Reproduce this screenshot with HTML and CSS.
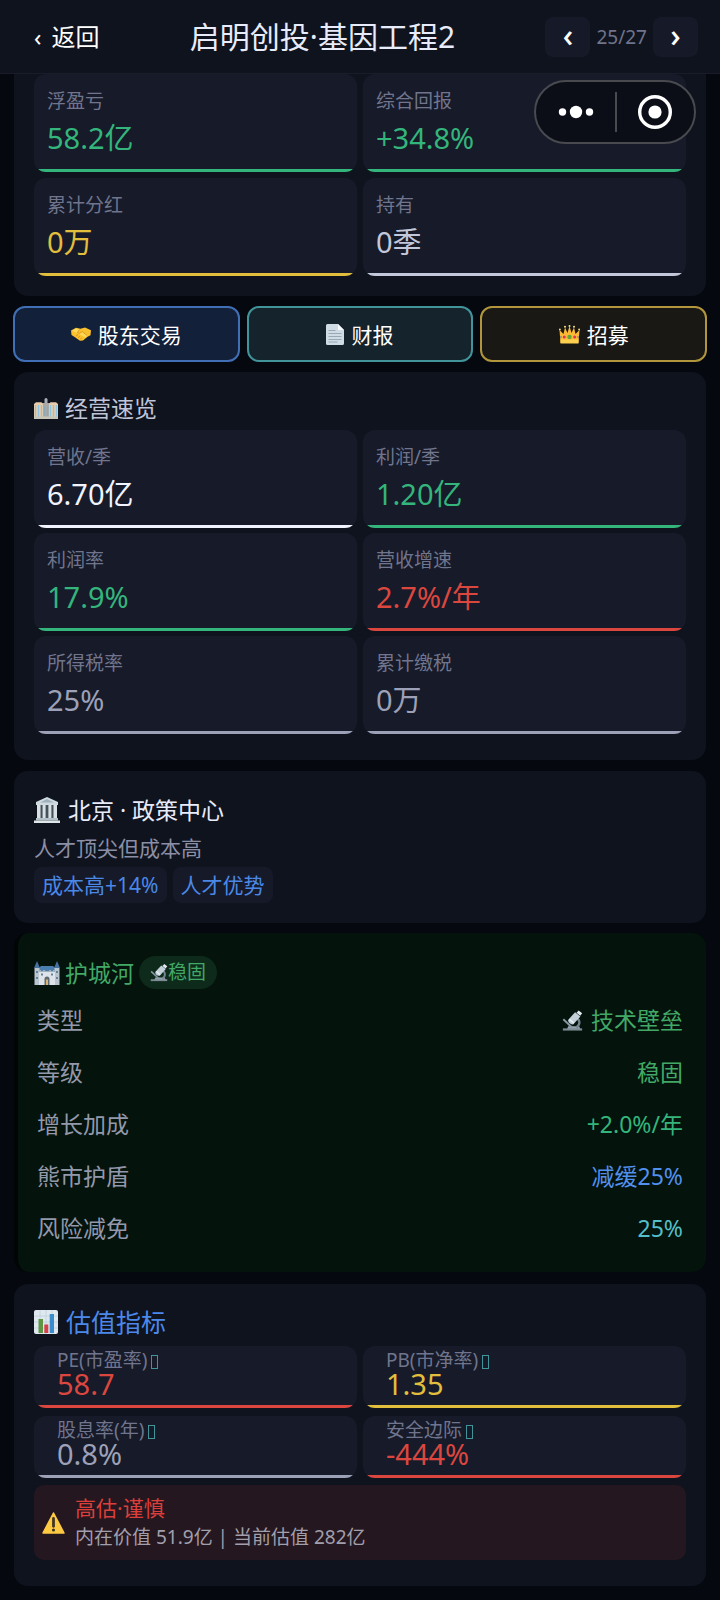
FILE: index.html
```html
<!DOCTYPE html>
<html lang="zh-CN">
<head>
<meta charset="utf-8">
<meta name="viewport" content="width=device-width, initial-scale=1">
<title>启明创投·基因工程2</title>
<link rel="stylesheet" href="styles.css">
</head>
<body>
<svg class="defs" aria-hidden="true">
  <symbol id="microscope" viewBox="0 0 24 24">
    <path d="M1 21h22v2.500H1z" fill="#7d8b95"/>
    <path d="M7 18.500h12.500l1.500 3H6z" fill="#94a3ad"/>
    <path d="M15 8.500c6 2 6.500 8 1.500 11.500" fill="none" stroke="#758590" stroke-width="2.600"/>
    <path d="M1.500 10.500l10 9.500" stroke="#8798a3" stroke-width="2.200"/>
    <path d="M15 2.500l6 4.800-8 9c-2.500 1-6.500-2-6-5z" fill="#c3d0d8"/>
    <path d="M8.500 10.500l5 4.500" stroke="#eef3f6" stroke-width="1.500"/>
    <path d="M19 .5l4 3.200-2.200 3-4.200-3.500z" fill="#e2eaef"/>
  </symbol>
</svg>

<header class="topbar">
  <button class="back" type="button"><span>‹</span><span>返回</span></button>
  <h1 class="page-title">启明创投·基因工程2</h1>
  <nav class="pager" aria-label="翻页">
    <button class="pager-button" type="button" aria-label="上一个">‹</button>
    <span class="pager-count">25/27</span>
    <button class="pager-button" type="button" aria-label="下一个">›</button>
  </nav>
</header>

<div class="capsule">
  <button class="capsule-button" type="button" aria-label="更多">
    <svg width="36" height="14" viewBox="0 0 36 14"><g fill="#fff"><circle cx="4.500" cy="7" r="3.700"/><circle cx="18" cy="7" r="6.200"/><circle cx="31.500" cy="7" r="3.700"/></g></svg>
  </button>
  <button class="capsule-button" type="button" aria-label="关闭">
    <svg width="34" height="34" viewBox="0 0 34 34"><circle cx="17" cy="17" r="15.300" fill="none" stroke="#fff" stroke-width="3.400"/><circle cx="17" cy="17" r="6.600" fill="#fff"/></svg>
  </button>
</div>

<main class="content">
  <section class="card card-cut">
    <div class="tiles tiles-wide">
      <div class="tile green"><span class="label">浮盈亏</span><span class="value">58.2亿</span></div>
      <div class="tile green"><span class="label">综合回报</span><span class="value">+34.8%</span></div>
      <div class="tile yellow"><span class="label">累计分红</span><span class="value">0万</span></div>
      <div class="tile silver"><span class="label">持有</span><span class="value">0季</span></div>
    </div>
  </section>

  <div class="actions">
    <button class="action action-blue" type="button">
      <svg width="20" height="14" viewBox="0 0 20 14"><path d="M0 3.500L5 .8l4.500 1L14 .5l6 2.800-.5 5-3 1.500-4.500 3.700-3 .2-5-3.400L.5 8z" fill="#fbc02d"/><path d="M1 3.800L5 1.500l4 1-2.500 3 2 1 3-2 5 4-1.500 2" fill="#ffd95a"/><path d="M8.500 2.500L6.300 5.700l2 .8 3-1.800 5 4M5 9l2-1.500M7 10.800l2-1.800M9.300 12.200L11 10.500" fill="none" stroke="#d68b16" stroke-width=".8"/></svg>
      股东交易
    </button>
    <button class="action action-teal" type="button">
      <svg width="18" height="21" viewBox="0 0 18 21"><path d="M1.500 0H12l6 6v13.500a1.500 1.500 0 0 1-1.500 1.500h-15A1.500 1.500 0 0 1 0 19.500v-18A1.500 1.500 0 0 1 1.500 0z" fill="#cfdce5"/><path d="M12 0l6 6h-6z" fill="#f8fbfd"/><path d="M2.500 6.500h7M2.500 9.500h13M2.500 12.500h13M2.500 15.500h13M2.500 18h9" stroke="#98a9b5" stroke-width="1"/></svg>
      财报
    </button>
    <button class="action action-gold" type="button">
      <svg width="21" height="19" viewBox="0 0 21 19"><path d="M1.500 18L.5 5l4 4L6 2.500 8.500 8l2-7 2 7L15 2.500 16.500 9l4-4-1 13z" fill="#fbb936"/><path d="M1.500 14.500h18V18.500h-18z" fill="#ffd04f"/><g fill="#ffe082"><circle cx=".9" cy="4.500" r=".9"/><circle cx="6" cy="1.800" r="1"/><circle cx="10.500" cy="1" r="1"/><circle cx="15" cy="1.800" r="1"/><circle cx="20.100" cy="4.500" r=".9"/></g><circle cx="10.500" cy="12" r="2.200" fill="#65a532"/><circle cx="5.300" cy="12" r="1.500" fill="#dc3460"/><circle cx="15.700" cy="12" r="1.500" fill="#dc3460"/><circle cx="2" cy="12" r=".8" fill="#397bbc"/><circle cx="19" cy="12" r=".8" fill="#397bbc"/></svg>
      招募
    </button>
  </div>

  <section class="card card-overview">
    <h2 class="heading muted">
      <svg width="24" height="21" viewBox="0 0 24 21"><path d="M10.500 1.500a1.500 1.500 0 0 1 3 0V7h-3z" fill="#a8b0b5"/><path d="M7 5h10v16H7z" fill="#a9aaa6"/><path d="M0 6l2-1.800h5.500L9 6v15H0zM15 6l1.500-1.800H22L24 6v15h-9z" fill="#e8cba9"/><path d="M1.500 7v12M4.500 7v12M7.500 7v12M16.500 7v12M19.500 7v12M22.500 7v12" stroke="#8dc5e0" stroke-width="1.300"/><path d="M10.500 8v10M13.500 8v10" stroke="#8ba9b7" stroke-width="1.200"/><path d="M0 18.500h24V21H0z" fill="#c7c4b9"/></svg>
      经营速览
    </h2>
    <div class="tiles">
      <div class="tile white"><span class="label">营收/季</span><span class="value">6.70亿</span></div>
      <div class="tile green"><span class="label">利润/季</span><span class="value">1.20亿</span></div>
      <div class="tile green"><span class="label">利润率</span><span class="value">17.9%</span></div>
      <div class="tile red"><span class="label">营收增速</span><span class="value">2.7%/年</span></div>
      <div class="tile gray"><span class="label">所得税率</span><span class="value">25%</span></div>
      <div class="tile gray"><span class="label">累计缴税</span><span class="value">0万</span></div>
    </div>
  </section>

  <section class="card card-city">
    <h2 class="heading city-heading">
      <svg width="26" height="26" viewBox="0 0 26 26"><path d="M13 0l11 5v3H2V5z" fill="#cfdade"/><path d="M13 2l7 3.500H6z" fill="#9fb1ba"/><path d="M3.500 8h19v14h-19z" fill="#45535c"/><path d="M3 8h3.500v14H3zM8.600 8h3v14h-3zM14.400 8h3v14h-3zM19.500 8H23v14h-3.500z" fill="#d8e0e3"/><path d="M2 21h22v2.500H2z" fill="#b2c0c7"/><path d="M0 23.500h26V26H0z" fill="#e0e7ea"/></svg>
      北京 · 政策中心
    </h2>
    <p class="city-note">人才顶尖但成本高</p>
    <div class="tags"><span class="tag">成本高+14%</span><span class="tag">人才优势</span></div>
  </section>

  <section class="card card-moat">
    <h2 class="heading moat-heading">
      <svg width="26" height="24" viewBox="0 0 26 24"><path d="M3 0l3 7H0zM23 0l3 7h-6z" fill="#47719f"/><path d="M5 7l2-2h12l2 2v4H5z" fill="#4b7eaf"/><path d="M.5 7h5v17h-5zM20.500 7h5v17h-5z" fill="#b9c6cf"/><path d="M5 11h16v13H5z" fill="#dde3e8"/><path d="M5 11v-2h2v1h2V9h2v1h4V9h2v1h2V9h2v2z" fill="#9fb0bd"/><path d="M10.500 24v-6a2.500 2.500 0 0 1 5 0v6z" fill="#5d6970"/><path d="M12 24v-5.500h2V24z" fill="#d9b475"/><path d="M7 12.500h2v2H7zM17 12.500h2v2h-2zM2 10h2v2H2zM22 10h2v2h-2zM2 16h2v2H2zM22 16h2v2h-2z" fill="#688399"/></svg>
      护城河
      <span class="badge"><svg width="18" height="19"><use href="#microscope"/></svg>稳固</span>
    </h2>
    <dl class="facts">
      <div class="fact"><dt>类型</dt><dd><svg width="21" height="23"><use href="#microscope"/></svg>技术壁垒</dd></div>
      <div class="fact"><dt>等级</dt><dd>稳固</dd></div>
      <div class="fact"><dt>增长加成</dt><dd class="green">+2.0%/年</dd></div>
      <div class="fact"><dt>熊市护盾</dt><dd class="blue">减缓25%</dd></div>
      <div class="fact"><dt>风险减免</dt><dd class="teal">25%</dd></div>
    </dl>
  </section>

  <section class="card card-valuation">
    <h2 class="heading valuation-heading">
      <svg width="24" height="24" viewBox="0 0 24 24"><rect width="24" height="24" rx="2" fill="#dfe8ef"/><path d="M0 6h24M0 12h24M0 18h24M6 0v24M12 0v24M18 0v24" stroke="#bed0dc" stroke-width=".8"/><path d="M4.500 9h4.500v14H4.500z" fill="#5d9645"/><path d="M10.300 14.500h4V23h-4z" fill="#d5404b"/><path d="M15.700 4H20v19h-4.300z" fill="#398dcc"/></svg>
      估值指标
    </h2>
    <div class="tiles tiles-compact">
      <div class="tile red"><span class="label">PE(市盈率)<button class="hint" type="button" aria-label="市盈率说明"></button></span><span class="value">58.7</span></div>
      <div class="tile yellow"><span class="label">PB(市净率)<button class="hint" type="button" aria-label="市净率说明"></button></span><span class="value">1.35</span></div>
      <div class="tile gray"><span class="label">股息率(年)<button class="hint" type="button" aria-label="股息率说明"></button></span><span class="value">0.8%</span></div>
      <div class="tile red"><span class="label">安全边际<button class="hint" type="button" aria-label="安全边际说明"></button></span><span class="value">-444%</span></div>
    </div>
    <div class="warning">
      <svg width="23" height="22" viewBox="0 0 23 22"><path d="M11.500 1L22 21H1z" fill="#ffca43" stroke="#ffca43" stroke-width="1.500" stroke-linejoin="round"/><path d="M11.500 6.500v7.800" stroke="#423624" stroke-width="2.800" stroke-linecap="round"/><circle cx="11.500" cy="18" r="1.600" fill="#423624"/></svg>
      <div>
        <strong class="warning-title">高估·谨慎</strong>
        <p class="warning-text">内在价值 51.9亿 | 当前估值 282亿</p>
      </div>
    </div>
  </section>
</main>
</body>
</html>
```

FILE: styles.css
```css
* { box-sizing: border-box; margin: 0; padding: 0; }

body {
  position: relative;
  background: #05080f;
  color: #e8ebfa;
  font-family: "Noto Sans", "Noto Sans CJK SC", sans-serif;
  font-size: 19px;
  font-weight: 400;
}

button { font: inherit; color: inherit; background: none; border: 0; }
h1, h2, strong { font-weight: 400; }
svg { display: block; flex: none; }
.defs { position: absolute; width: 0; height: 0; }

.green { color: #34b57c; }
.yellow { color: #e2be3d; }
.red { color: #db473f; }
.gray { color: #9da1b8; }
.silver { color: #c3c7da; }
.white { color: #f1f3ff; }
.blue { color: #5290ee; }
.teal { color: #55bfc9; }

.topbar {
  display: flex;
  align-items: center;
  justify-content: space-between;
  height: 74px;
  padding: 0 22px 0 34px;
  background: #0f131e;
  border-bottom: 1px solid #1a1d29;
}
.back { display: flex; gap: 10px; font-size: 24px; line-height: 36px; color: #fff; }
.page-title { font-size: 30px; line-height: 44px; white-space: nowrap; }
.pager { display: flex; align-items: center; gap: 6px; }
.pager-button {
  width: 45px;
  height: 40px;
  padding-bottom: 4px;
  border-radius: 8px;
  background: #151928;
  color: #fff;
  font-size: 32px;
  font-weight: 500;
  line-height: 36px;
}
.pager-count { color: #6f748b; }

.capsule {
  position: absolute;
  top: 80px;
  right: 24px;
  display: flex;
  width: 162px;
  height: 64px;
  border: 2px solid #484a50;
  border-radius: 32px;
  background: #0c0e17;
}
.capsule-button { display: flex; flex: 1; align-items: center; justify-content: center; }
.capsule-button + .capsule-button {
  background: linear-gradient(#484a50, #484a50) left center / 2px 40px no-repeat;
}

.content { padding: 0 14px 14px; }
.card {
  padding: 20px;
  border-radius: 14px;
  background: #0f131e;
}
.card-cut { padding-top: 0; border-radius: 0 0 14px 14px; }

.tiles { display: grid; grid-template-columns: 1fr 1fr; gap: 5px 6px; }
.tiles-wide { row-gap: 6px; }
.tile {
  display: flex;
  flex-direction: column;
  gap: 7px;
  padding: 15px 13px 16px;
  border-radius: 12px;
  background: linear-gradient(currentColor, currentColor) bottom / 100% 3px no-repeat #161a29;
}
.label { color: #70758d; font-size: 19px; line-height: 24px; }
.value { font-size: 29px; line-height: 36px; }

.actions {
  display: grid;
  grid-template-columns: repeat(3, 1fr);
  gap: 7px;
  margin: 10px -1px;
}
.action {
  display: flex;
  align-items: center;
  justify-content: center;
  gap: 7px;
  height: 56px;
  border: 2px solid;
  border-radius: 12px;
  font-size: 21px;
}
.action-blue { border-color: #416fb5; background: #13203a; }
.action-teal { border-color: #42949b; background: #15232c; }
.action-gold { border-color: #b2963c; background: #191814; }
.action { color: #fff; }

.heading { display: flex; align-items: center; gap: 7px; font-size: 23px; line-height: 32px; }
.muted { color: #c1c5d9; }
.card-overview { padding-bottom: 26px; }
.card-overview .heading { margin-bottom: 6px; }

.card-city { margin-top: 11px; }
.city-heading { gap: 8px; line-height: 38px; }
.city-note { margin-top: 4px; color: #8b8fa5; font-size: 21px; line-height: 30px; }
.tags { display: flex; gap: 6px; margin-top: 4px; }
.tag {
  padding: 0 8px;
  border-radius: 8px;
  background: #151928;
  color: #4b88e6;
  font-size: 21px;
  line-height: 36px;
}

.card-moat {
  margin-top: 10px;
  padding: 23px 20px 18px;
  border-left: 4px solid #010604;
  padding-left: 16px;
  background: #04130b;
  color: #42a866;
}
.moat-heading { gap: 5px; }
.badge {
  display: flex;
  align-items: center;
  padding: 0 11px;
  border-radius: 17px;
  background: #0d2a1b;
  font-size: 19px;
  line-height: 33px;
}
.facts { padding: 5px 3px 0; }
.fact {
  display: flex;
  align-items: center;
  justify-content: space-between;
  font-size: 23px;
  line-height: 52px;
}
.fact dt { color: #9398ab; }
.fact dd { display: flex; align-items: center; gap: 8px; }

.card-valuation { margin-top: 12px; padding-bottom: 26px; }
.valuation-heading { gap: 8px; margin-bottom: 6px; color: #4b88ea; font-size: 25px; line-height: 36px; }
.tiles-compact { row-gap: 8px; }
.tiles-compact .tile { gap: 0; height: 62px; padding: 2px 23px 0; }
.tiles-compact .value { line-height: 24px; }
.hint {
  display: inline-block;
  width: 7px;
  height: 14px;
  margin-left: 4px;
  border: 1px solid #42949b;
  vertical-align: -1px;
}

.warning {
  display: flex;
  align-items: center;
  gap: 10px;
  margin-top: 7px;
  padding: 8px;
  border-radius: 10px;
  background: #25171f;
}
.warning-title { display: block; color: #db3f3b; font-size: 21px; line-height: 30px; }
.warning-text { color: #a19fac; line-height: 29px; }
```
